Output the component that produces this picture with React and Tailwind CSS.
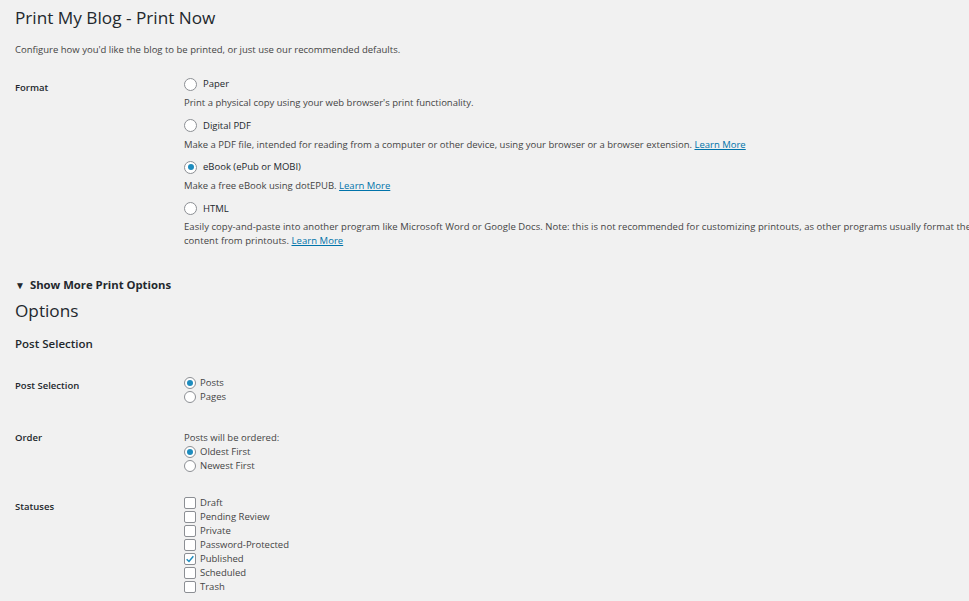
function Radio({ checked, size = 'lg' }) {
  const box = size === 'lg' ? 'w-[13px] h-[13px]' : 'w-[12px] h-[12px]'
  return (
    <span className={`${box} shrink-0 rounded-full border border-[#8c8f94] bg-white flex items-center justify-center`}>
      {checked && <span className="w-[6px] h-[6px] rounded-full bg-[#1e8cbe]" />}
    </span>
  )
}

function Checkbox({ checked }) {
  return (
    <span className="w-[12px] h-[12px] shrink-0 rounded-[2px] border border-[#8c8f94] bg-white flex items-center justify-center">
      {checked && (
        <svg viewBox="0 0 12 12" className="w-[10px] h-[10px]">
          <path d="M2 6.2 L4.8 9 L10 2.8" fill="none" stroke="#1e8cbe" strokeWidth="1.8" />
        </svg>
      )}
    </span>
  )
}

function LearnMore() {
  return <a className="text-[#0073aa] underline cursor-pointer">Learn More</a>
}

function FormatOption({ label, checked, children }) {
  return (
    <div className="mb-[7.5px]">
      <label className="h-[16px] flex items-center gap-[6px] text-[#23282d]">
        <Radio checked={checked} />
        <span>{label}</span>
      </label>
      <p className="mt-[3px] leading-[15px]">{children}</p>
    </div>
  )
}

function SmallRadio({ label, checked }) {
  return (
    <label className="h-[14px] flex items-center gap-[4px]">
      <Radio checked={checked} size="sm" />
      <span>{label}</span>
    </label>
  )
}

function Row({ label, labelPad, className, children }) {
  return (
    <div className={`flex ${className}`}>
      <div className={`w-[169px] shrink-0 font-semibold text-[#23282d] leading-[14px] ${labelPad}`}>{label}</div>
      <div className="flex-1 leading-[14px]">{children}</div>
    </div>
  )
}

const statuses = [
  ['Draft', false],
  ['Pending Review', false],
  ['Private', false],
  ['Password-Protected', false],
  ['Published', true],
  ['Scheduled', false],
  ['Trash', false],
]

export default function App() {
  return (
    <div className="w-[969px] h-[601px] overflow-hidden bg-[#f1f1f1] pl-[15px] font-['Open_Sans',sans-serif] text-[9.5px] text-[#444]">
      <h1 className="pt-[6px] text-[17.2px] leading-[24px] text-[#23282d]">Print My Blog - Print Now</h1>
      <p className="mt-[13px] leading-[14px]">
        Configure how you'd like the blog to be printed, or just use our recommended defaults.
      </p>

      <Row label="Format" labelPad="pt-[5px]" className="mt-[19px]">
        <FormatOption label="Paper">
          Print a physical copy using your web browser's print functionality.
        </FormatOption>
        <FormatOption label="Digital PDF">
          Make a PDF file, intended for reading from a computer or other device, using your browser or a browser extension. <LearnMore />
        </FormatOption>
        <FormatOption label="eBook (ePub or MOBI)" checked>
          Make a free eBook using dotEPUB. <LearnMore />
        </FormatOption>
        <div>
          <label className="h-[16px] flex items-center gap-[6px] text-[#23282d]">
            <Radio />
            <span>HTML</span>
          </label>
          <p className="mt-[3px] leading-[14.5px] whitespace-nowrap tracking-[0.05px]">
            Easily copy-and-paste into another program like Microsoft Word or Google Docs. Note: this is not recommended for customizing printouts, as other programs usually format the
            <br />
            content from printouts. <LearnMore />
          </p>
        </div>
      </Row>

      <div className="mt-[28.5px] h-[16px] flex items-center gap-[5px] text-[11.3px] font-bold text-[#23282d]">
        <span className="text-[10px] leading-none">▼</span>
        <span>Show More Print Options</span>
      </div>

      <h2 className="mt-[6px] text-[17.2px] leading-[24px] text-[#23282d]">Options</h2>
      <h3 className="mt-[12px] text-[11.5px] leading-[18px] font-semibold text-[#23282d]">Post Selection</h3>

      <Row label="Post Selection" labelPad="pt-[3px]" className="mt-[23px]">
        <SmallRadio label="Posts" checked />
        <SmallRadio label="Pages" />
      </Row>

      <Row label="Order" labelPad="pt-0" className="mt-[27px]">
        <p className="h-[14px]">Posts will be ordered:</p>
        <SmallRadio label="Oldest First" checked />
        <SmallRadio label="Newest First" />
      </Row>

      <Row label="Statuses" labelPad="pt-[4px]" className="mt-[23px]">
        {statuses.map(([name, checked]) => (
          <label key={name} className="h-[14px] flex items-center gap-[4px]">
            <Checkbox checked={checked} />
            <span>{name}</span>
          </label>
        ))}
      </Row>
    </div>
  )
}
